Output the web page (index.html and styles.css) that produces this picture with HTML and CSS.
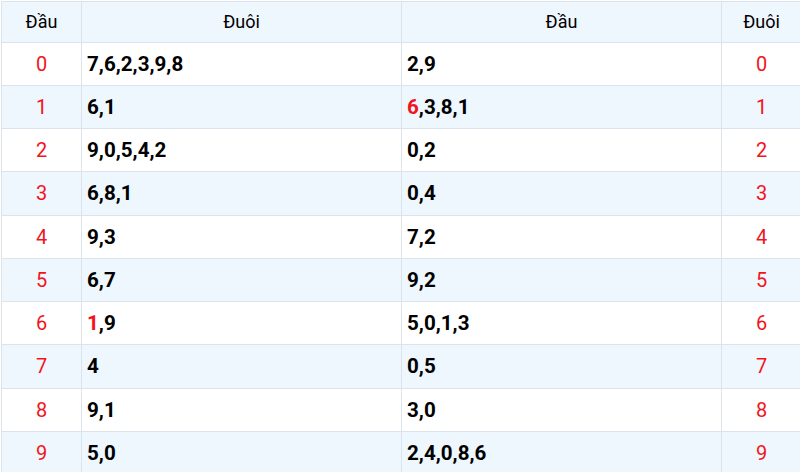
FILE: index.html
```html
<!DOCTYPE html>
<html lang="vi">
<head>
<meta charset="utf-8">
<title>Đầu Đuôi</title>
<link rel="stylesheet" href="styles.css">
</head>
<body>
<div class="wrap">
<table class="dd">
  <colgroup>
    <col class="c-s"><col class="c-w"><col class="c-w"><col class="c-s">
  </colgroup>
  <thead>
    <tr><th>Đầu</th><th>Đuôi</th><th>Đầu</th><th>Đuôi</th></tr>
  </thead>
  <tbody>
    <tr><td class="n">0</td><td class="v">7,6,2,3,9,8</td><td class="v">2,9</td><td class="n">0</td></tr>
    <tr><td class="n">1</td><td class="v">6,1</td><td class="v"><span class="hl">6</span>,3,8,1</td><td class="n">1</td></tr>
    <tr><td class="n">2</td><td class="v">9,0,5,4,2</td><td class="v">0,2</td><td class="n">2</td></tr>
    <tr><td class="n">3</td><td class="v">6,8,1</td><td class="v">0,4</td><td class="n">3</td></tr>
    <tr><td class="n">4</td><td class="v">9,3</td><td class="v">7,2</td><td class="n">4</td></tr>
    <tr><td class="n">5</td><td class="v">6,7</td><td class="v">9,2</td><td class="n">5</td></tr>
    <tr><td class="n">6</td><td class="v"><span class="hl">1</span>,9</td><td class="v">5,0,1,3</td><td class="n">6</td></tr>
    <tr><td class="n">7</td><td class="v">4</td><td class="v">0,5</td><td class="n">7</td></tr>
    <tr><td class="n">8</td><td class="v">9,1</td><td class="v">3,0</td><td class="n">8</td></tr>
    <tr><td class="n">9</td><td class="v">5,0</td><td class="v">2,4,0,8,6</td><td class="n">9</td></tr>
  </tbody>
</table>
</div>
</body>
</html>
```
FILE: styles.css
```css
html, body {
  margin: 0;
  padding: 0;
  background: #ffffff;
  overflow: hidden;
}
.wrap {
  padding: 1px 0 0 1px;
  width: 820px;
}
.dd {
  border-collapse: collapse;
  table-layout: fixed;
  width: 801px;
  font-family: Roboto, "Noto Sans", Arial, sans-serif;
  color: #000;
}
.c-s { width: 80px; }
.c-w { width: 320px; }
.dd th, .dd td {
  border: 1px solid #dde3ea;
  padding: 0 5px;
}
.dd th {
  height: 39.5px;
  background: #eef6fe;
  font-weight: 400;
  font-size: 18px;
  text-align: center;
}
.dd td {
  height: 42.25px;
}
.dd tbody tr:nth-child(even) td {
  background: #eef6fe;
}
.dd td.n {
  text-align: center;
  color: #f2141c;
  font-size: 20px;
}
.dd td.v {
  text-align: left;
  font-weight: 700;
  font-size: 20.6px;
}
.hl {
  color: #f2141c;
}
```
